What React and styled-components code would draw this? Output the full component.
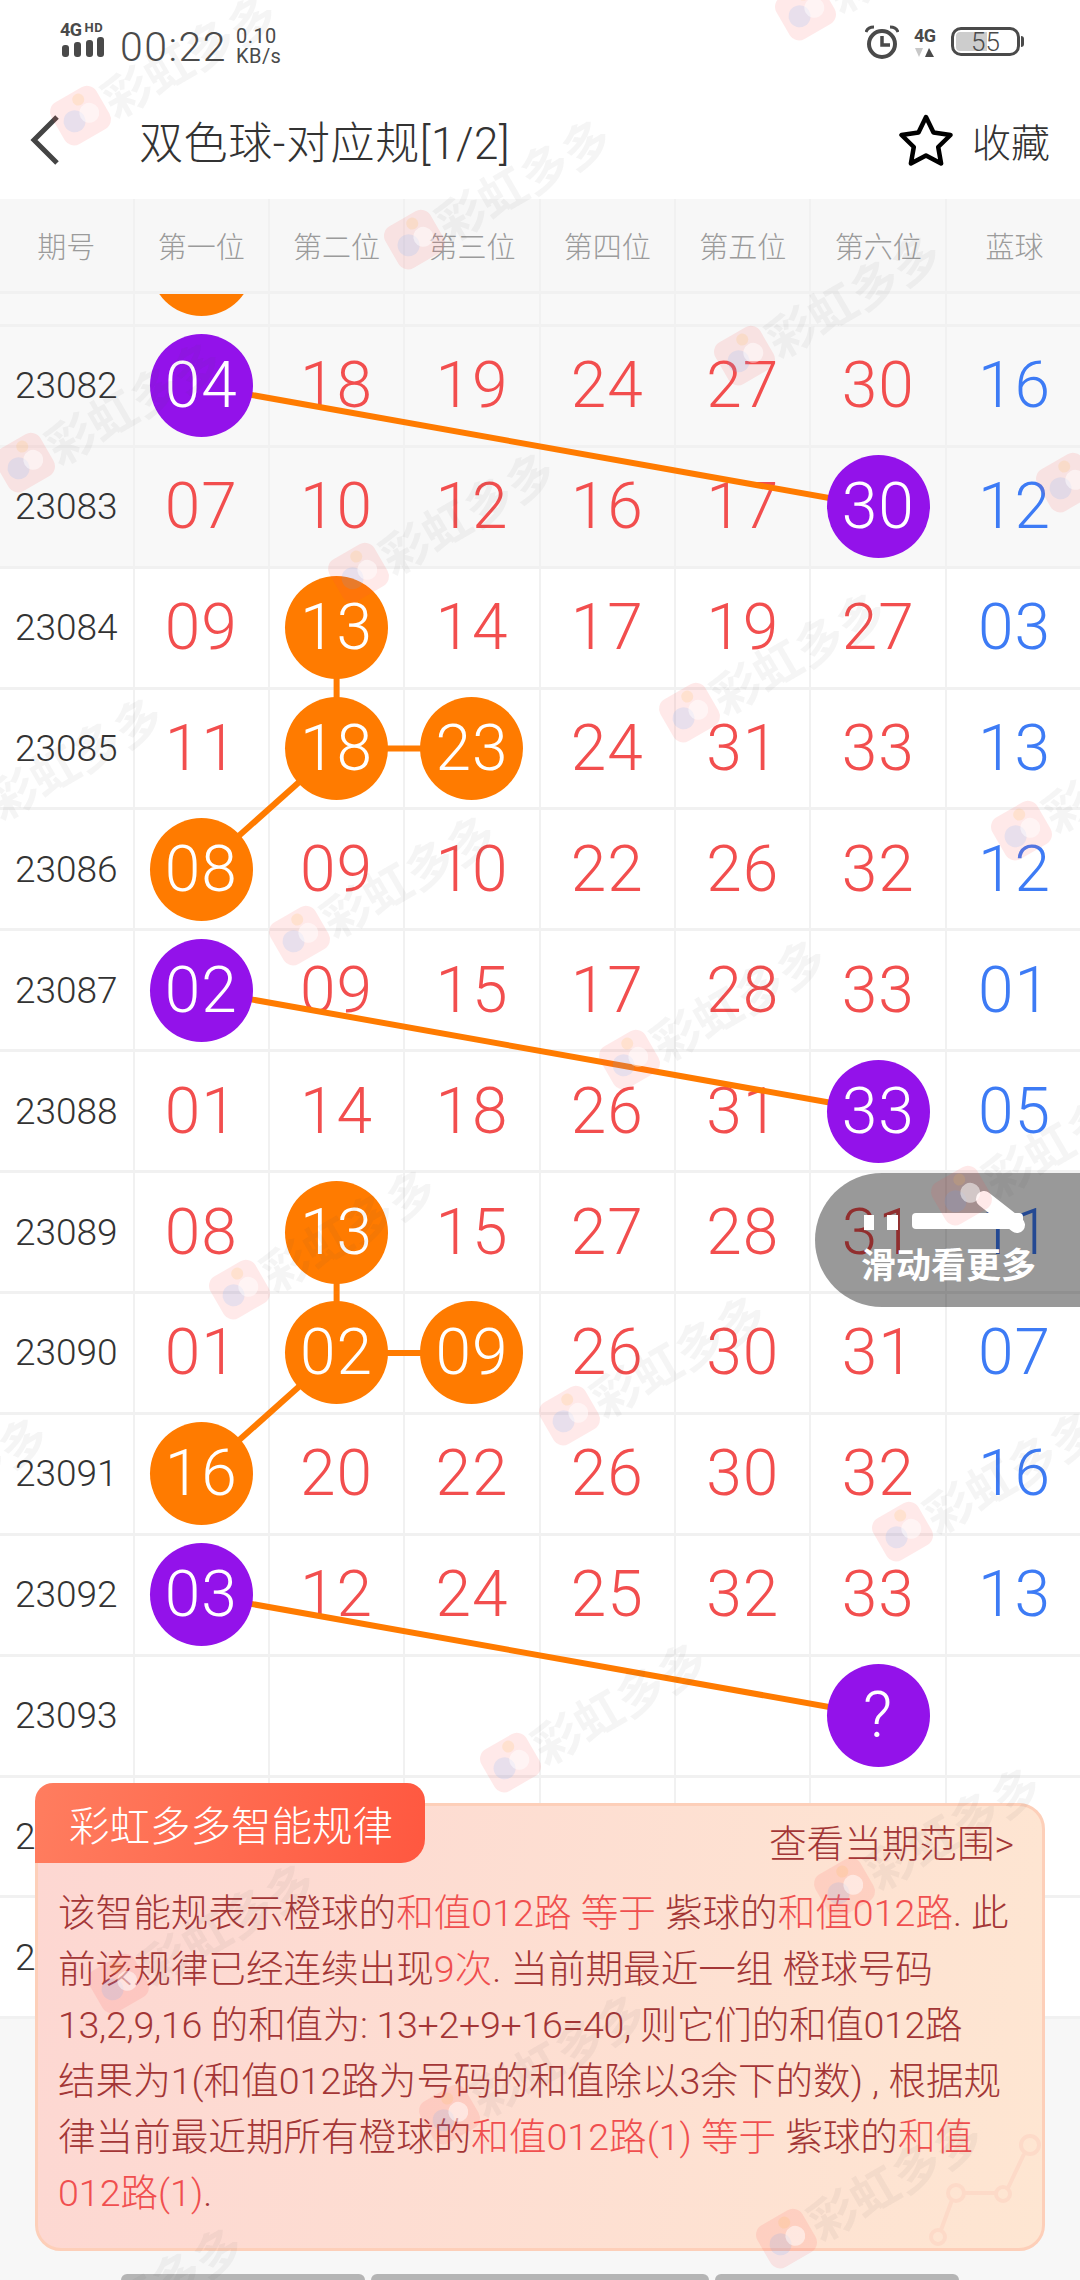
import React from 'react';
import styled, { createGlobalStyle } from 'styled-components';

const FONT = `Roboto, "Noto Sans CJK SC", sans-serif`;
const ORANGE = '#ff7b00';
const PURPLE = '#9312ea';
const LINE = '#f1f1f1';
const ROW_H = 120.9;
const COLUMNS = '134.5px repeat(7, 135.4px)';

const GlobalStyle = createGlobalStyle`
  html, body {
    margin: 0;
    padding: 0;
    background: #f7f7f7;
    font-family: ${FONT};
  }
`;

const Page = styled.div`
  position: relative;
  width: 1080px;
  height: 2280px;
  overflow: hidden;
  display: flex;
  flex-direction: column;
  background: #f7f7f7;
`;

const StatusBar = styled.div`
  height: 70px;
  box-sizing: border-box;
  background: #fff;
  display: flex;
  justify-content: space-between;
  padding: 23px 60px 0 60px;
  color: #4a4a4a;
`;

const StatusGroup = styled.div`
  display: flex;
  align-items: flex-start;
`;

const Network = styled.div`
  width: 48px;
  margin-right: 12px;
  display: flex;
  flex-direction: column;
`;

const NetworkLabel = styled.div`
  display: flex;
  align-items: flex-start;
  height: 14px;
  font-size: 18px;
  line-height: 14px;
  font-weight: 700;
  letter-spacing: -0.5px;
  small {
    font-size: 13px;
    line-height: 10px;
    margin-left: 3px;
    letter-spacing: 0.5px;
  }
`;

const Clock = styled.div`
  font-size: 41px;
  line-height: 40px;
  margin-top: 4px;
  font-weight: 300;
  letter-spacing: 1.5px;
`;

const Speed = styled.div`
  margin-left: 9px;
  font-size: 20px;
  line-height: 20px;
  margin-top: 3px;
  font-weight: 400;
  letter-spacing: 0.4px;
`;

const MobileData = styled.div`
  margin: 5px 13px 0 15px;
  width: 24px;
  font-size: 18px;
  line-height: 15px;
  font-weight: 700;
  letter-spacing: -0.5px;
  display: flex;
  flex-direction: column;
  svg {
    margin-top: 5px;
  }
`;

const Battery = styled.div`
  position: relative;
  width: 69px;
  height: 29px;
  margin-top: 4px;
  box-sizing: border-box;
  border: 3px solid #4a4a4a;
  border-radius: 10px;
  display: flex;
  align-items: center;
  justify-content: center;
  font-size: 26px;
  font-weight: 300;
  color: #4a4a4a;
  &::before {
    content: '';
    position: absolute;
    left: 2px;
    top: 2px;
    bottom: 2px;
    width: 31px;
    background: #cdcdcd;
    border-radius: 4px 0 0 4px;
  }
  &::after {
    content: '';
    position: absolute;
    right: -7px;
    top: 6px;
    height: 11px;
    width: 3px;
    background: #4a4a4a;
    border-radius: 0 3px 3px 0;
  }
  span {
    position: relative;
  }
`;

const NavBar = styled.div`
  height: 129px;
  box-sizing: border-box;
  background: #fff;
  display: flex;
  align-items: center;
  padding: 10px 30px 0 30px;
  color: #333;
`;

const NavTitle = styled.div`
  margin-left: 79px;
  flex: 1;
  font-size: 44px;
  font-weight: 300;
  letter-spacing: 0.6px;
  white-space: nowrap;
`;

const Favorite = styled.div`
  display: flex;
  align-items: center;
  gap: 18px;
  font-size: 39px;
  font-weight: 300;
`;

const TableHead = styled.div`
  display: grid;
  grid-template-columns: ${COLUMNS};
  height: 95px;
  box-sizing: border-box;
  background: #f7f7f7;
  border-bottom: 3px solid ${LINE};
`;

const HeadCell = styled.div`
  border-right: 2px solid ${LINE};
  display: flex;
  align-items: center;
  justify-content: center;
  font-size: 29px;
  font-weight: 300;
  color: #9b9b9b;
  &:last-child {
    border-right: none;
  }
`;

const TableBody = styled.div`
  flex: 1;
  overflow: hidden;
`;

const Rows = styled.div`
  position: relative;
  margin-top: -88px;
`;

const Row = styled.div`
  display: grid;
  grid-template-columns: ${COLUMNS};
  height: ${ROW_H}px;
  box-sizing: border-box;
  border-bottom: 3px solid ${LINE};
  background: ${(p) => (p.$shaded ? '#f8f8f8' : '#fff')};
`;

const Cell = styled.div`
  border-right: 2px solid ${LINE};
  display: flex;
  align-items: center;
  justify-content: center;
  &:last-child {
    border-right: none;
  }
`;

const Issue = styled(Cell)`
  font-size: 37px;
  font-weight: 300;
  color: #333;
`;

const Num = styled(Cell)`
  font-size: 64px;
  font-weight: 300;
  letter-spacing: 1px;
  color: ${(p) => (p.$blue ? '#3d7bf5' : '#f24e4e')};
`;

const Ball = styled.div`
  position: relative;
  z-index: 2;
  width: 103px;
  height: 103px;
  flex: none;
  border-radius: 50%;
  display: flex;
  align-items: center;
  justify-content: center;
  color: #fff;
  background: ${(p) => (p.$kind === 'p' ? PURPLE : ORANGE)};
`;

const Links = styled.svg`
  position: absolute;
  left: 0;
  top: 0;
  z-index: 1;
  pointer-events: none;
`;

const Footer = styled.div`
  height: 6px;
  display: flex;
  gap: 6px;
  padding-left: 121px;
`;

const FooterTab = styled.div`
  width: ${(p) => p.$w}px;
  background: #b5b5b5;
  border-radius: 6px 6px 0 0;
`;

const SwipeHint = styled.div`
  position: absolute;
  z-index: 6;
  left: 815px;
  top: 1173px;
  width: 265px;
  height: 134px;
  box-sizing: border-box;
  padding: 18px 0 0 46px;
  border-radius: 67px 0 0 67px;
  background: rgba(0, 0, 0, 0.4);
  color: #fff;
  font-size: 35px;
  font-weight: 700;
  line-height: 40px;
  svg {
    display: block;
    margin-bottom: -2px;
  }
`;

const RuleCard = styled.div`
  position: absolute;
  z-index: 5;
  left: 35px;
  top: 1803px;
  width: 1010px;
  height: 448px;
  box-sizing: border-box;
  padding: 16px 28px 0 20px;
  border: 3px solid #fdcfb9;
  border-radius: 26px;
  background: linear-gradient(100deg, #fdd7d2, #fee6d2);
  color: #a33636;
`;

const RuleTab = styled.div`
  position: absolute;
  left: -3px;
  top: -23px;
  width: 390px;
  height: 80px;
  box-sizing: border-box;
  padding-left: 34px;
  display: flex;
  align-items: center;
  border-radius: 18px 18px 24px 0;
  background: linear-gradient(100deg, #ff7d5f, #ff5840);
  color: #fff;
  font-size: 40.5px;
  font-weight: 300;
`;

const RuleLink = styled.div`
  text-align: right;
  font-size: 37.6px;
  line-height: 42px;
  font-weight: 300;
  margin: 1px 0 20px;
`;

const RuleLine = styled.div`
  position: relative;
  font-size: 37.6px;
  line-height: 56px;
  font-weight: 300;
  letter-spacing: ${(p) => (p.$tight ? '-0.3px' : '0')};
  white-space: pre;
  b {
    font-weight: 300;
    color: #f04f4f;
  }
`;

const RuleGraph = styled.svg`
  position: absolute;
  right: 0;
  bottom: 0;
`;

const Watermark = styled.div`
  position: absolute;
  z-index: 10;
  left: ${(p) => p.$x - 32}px;
  top: ${(p) => p.$y - 32}px;
  display: flex;
  align-items: center;
  transform: rotate(-30deg);
  transform-origin: 32px 32px;
  pointer-events: none;
  white-space: nowrap;
  font-size: 48px;
  font-weight: 700;
  color: rgba(70, 70, 70, 0.055);
`;

const WatermarkText = styled.span`
  margin-left: -4px;
`;

const rows = [
  { id: '23081', nums: ['06', '', '', '', '', ''], blue: '', balls: { 0: 'o' }, shaded: true, hideId: true },
  { id: '23082', nums: ['04', '18', '19', '24', '27', '30'], blue: '16', balls: { 0: 'p' }, shaded: true },
  { id: '23083', nums: ['07', '10', '12', '16', '17', '30'], blue: '12', balls: { 5: 'p' }, shaded: true },
  { id: '23084', nums: ['09', '13', '14', '17', '19', '27'], blue: '03', balls: { 1: 'o' } },
  { id: '23085', nums: ['11', '18', '23', '24', '31', '33'], blue: '13', balls: { 1: 'o', 2: 'o' } },
  { id: '23086', nums: ['08', '09', '10', '22', '26', '32'], blue: '12', balls: { 0: 'o' } },
  { id: '23087', nums: ['02', '09', '15', '17', '28', '33'], blue: '01', balls: { 0: 'p' } },
  { id: '23088', nums: ['01', '14', '18', '26', '31', '33'], blue: '05', balls: { 5: 'p' } },
  { id: '23089', nums: ['08', '13', '15', '27', '28', '31'], blue: '11', balls: { 1: 'o' } },
  { id: '23090', nums: ['01', '02', '09', '26', '30', '31'], blue: '07', balls: { 1: 'o', 2: 'o' } },
  { id: '23091', nums: ['16', '20', '22', '26', '30', '32'], blue: '16', balls: { 0: 'o' } },
  { id: '23092', nums: ['03', '12', '24', '25', '32', '33'], blue: '13', balls: { 0: 'p' } },
  { id: '23093', nums: ['', '', '', '', '', '?'], blue: '', balls: { 5: 'p' } },
  { id: '23094', nums: ['', '', '', '', '', ''], blue: '', balls: {} },
  { id: '23095', nums: ['', '', '', '', '', ''], blue: '', balls: {} },
];

// [row index, column, row index, column] of the balls that are joined
const links = [
  [1, 0, 2, 5],
  [3, 1, 4, 1],
  [4, 1, 4, 2],
  [4, 1, 5, 0],
  [6, 0, 7, 5],
  [8, 1, 9, 1],
  [9, 1, 9, 2],
  [9, 1, 10, 0],
  [11, 0, 12, 5],
];

const cx = (col) => 134.5 + 135.4 * col + 66.7;
const cy = (row) => 59 + ROW_H * row;

const marks = [
  [804, 8], [79, 113], [413, 237], [743, 353], [23, 460], [357, 570], [1065, 480], [688, 710],
  [1020, 828], [-35, 815], [298, 933], [628, 1057], [238, 1287], [568, 1413], [960, 1193],
  [901, 1529], [-150, 1535], [509, 1760], [843, 1885], [117, 1981], [448, 2112], [785, 2236], [45, 2345],
];

const heads = ['期号', '第一位', '第二位', '第三位', '第四位', '第五位', '第六位', '蓝球'];

function Logo() {
  return (
    <svg width="64" height="64" viewBox="0 0 64 64" style={{ flex: 'none' }}>
      <rect x="6" y="8" width="52" height="48" rx="11" fill="#ff4d4d" opacity="0.12" />
      <circle cx="24" cy="34" r="11" fill="#5aa0ff" opacity="0.14" />
      <circle cx="41" cy="34" r="10" fill="#fff" opacity="0.5" />
      <circle cx="38" cy="17" r="6" fill="#ffb84d" opacity="0.16" />
    </svg>
  );
}

export default function App() {
  return (
    <Page>
      <GlobalStyle />
      <StatusBar>
        <StatusGroup>
          <Network>
            <NetworkLabel>4G<small>HD</small></NetworkLabel>
            <svg width="46" height="20" viewBox="0 0 46 20">
              <rect x="2" y="8" width="7" height="12" rx="3" fill="#4a4a4a" />
              <rect x="14" y="5" width="7" height="15" rx="3" fill="#4a4a4a" />
              <rect x="26" y="3" width="7" height="17" rx="3" fill="#4a4a4a" />
              <rect x="37" y="0" width="7" height="20" rx="3" fill="#4a4a4a" />
            </svg>
          </Network>
          <Clock>00:22</Clock>
          <Speed>0.10<br />KB/s</Speed>
        </StatusGroup>
        <StatusGroup>
          <svg width="34" height="34" viewBox="0 0 34 34" style={{ marginTop: 2 }}>
            <circle cx="17" cy="19" r="13" fill="none" stroke="#4a4a4a" strokeWidth="4" />
            <path d="M17 11v9h8" fill="none" stroke="#4a4a4a" strokeWidth="3.5" />
            <path d="M1 7c1-3 4-5 8-5M33 7c-1-3-4-5-8-5" fill="none" stroke="#4a4a4a" strokeWidth="3" />
          </svg>
          <MobileData>
            4G
            <svg width="20" height="9" viewBox="0 0 20 9">
              <path d="M1 0h8L5 9z" fill="#c8c8c8" />
              <path d="M15 0l5 9h-9z" fill="#4a4a4a" />
            </svg>
          </MobileData>
          <Battery><span>55</span></Battery>
        </StatusGroup>
      </StatusBar>

      <NavBar>
        <svg width="30" height="50" viewBox="0 0 30 50" style={{ flex: 'none' }}>
          <path d="M27 2L4 25l23 23" fill="none" stroke="#444" strokeWidth="5" />
        </svg>
        <NavTitle>双色球-对应规[1/2]</NavTitle>
        <Favorite>
          <svg width="56" height="52" viewBox="0 0 56 52">
            <path
              d="M28 3l7.5 15.5 17 2.5-12.3 12 2.9 16.5L28 41.5 12.900 49.500l2.900-16.500L3.500 21l17-2.500z"
              fill="none"
              stroke="#000"
              strokeWidth="4.500"
              strokeLinejoin="round"
            />
          </svg>
          收藏
        </Favorite>
      </NavBar>

      <TableHead>
        {heads.map((h) => <HeadCell key={h}>{h}</HeadCell>)}
      </TableHead>

      <TableBody>
        <Rows>
          {rows.map((r) => (
            <Row key={r.id} $shaded={r.shaded}>
              <Issue>{r.hideId ? '' : r.id}</Issue>
              {r.nums.map((n, i) => (
                <Num key={i}>
                  {r.balls[i] ? <Ball $kind={r.balls[i]}>{n}</Ball> : n}
                </Num>
              ))}
              <Num $blue>{r.blue}</Num>
            </Row>
          ))}
          <Links width="1080" height="1700">
            {links.map(([r1, c1, r2, c2], i) => (
              <line key={i} x1={cx(c1)} y1={cy(r1)} x2={cx(c2)} y2={cy(r2)} stroke={ORANGE} strokeWidth="6" />
            ))}
          </Links>
        </Rows>
      </TableBody>

      <Footer>
        <FooterTab $w={244} />
        <FooterTab $w={338} />
        <FooterTab $w={244} />
      </Footer>

      <SwipeHint>
        <svg width="170" height="58" viewBox="0 0 170 58">
          <rect x="3" y="24" width="10" height="15" fill="#fff" />
          <rect x="26" y="24" width="11" height="15" fill="#fff" />
          <rect x="51" y="22" width="111" height="16" rx="4" fill="#fff" />
          <path d="M123 8l33 26" stroke="#fff" strokeWidth="16" strokeLinecap="round" />
        </svg>
        滑动看更多
      </SwipeHint>

      <RuleCard>
        <RuleGraph width="140" height="140" viewBox="0 0 140 140">
          <g fill="none" stroke="#fddac8" strokeWidth="4">
            <circle cx="128" cy="37" r="9" />
            <circle cx="54" cy="85" r="8" />
            <circle cx="101" cy="86" r="7" />
            <circle cx="36" cy="129" r="7" />
            <path d="M62 85h32M50 92l-11 30M106 80l16-34" />
          </g>
        </RuleGraph>
        <RuleTab>彩虹多多智能规律</RuleTab>
        <RuleLink>查看当期范围&gt;</RuleLink>
        <RuleLine>该智能规表示橙球的<b>和值012路 等于</b> 紫球的<b>和值012路</b>. 此</RuleLine>
        <RuleLine>前该规律已经连续出现<b>9次</b>. 当前期最近一组 橙球号码</RuleLine>
        <RuleLine $tight>13,2,9,16 的和值为: 13+2+9+16=40, 则它们的和值012路</RuleLine>
        <RuleLine>结果为1(和值012路为号码的和值除以3余下的数) , 根据规</RuleLine>
        <RuleLine>律当前最近期所有橙球的<b>和值012路(1) 等于</b> 紫球的<b>和值</b></RuleLine>
        <RuleLine><b>012路(1)</b>.</RuleLine>
      </RuleCard>

      {marks.map(([x, y]) => (
        <Watermark key={`${x}-${y}`} $x={x} $y={y}>
          <Logo />
          <WatermarkText>彩虹多多</WatermarkText>
        </Watermark>
      ))}
    </Page>
  );
}
